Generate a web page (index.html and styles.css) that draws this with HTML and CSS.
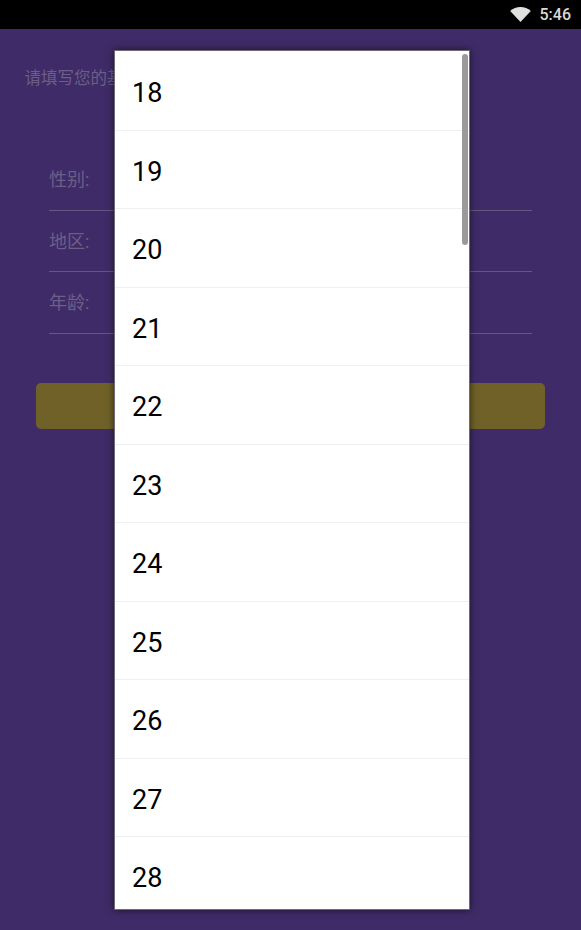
FILE: index.html
```html
<!DOCTYPE html>
<html lang="zh-CN">
<head>
    <meta charset="UTF-8">
    <meta name="viewport" content="width=device-width, initial-scale=1.0">
    <title>基本信息</title>
    <link rel="stylesheet" href="styles.css">
</head>
<body>
    <div class="status-bar">
        <svg class="wifi" viewBox="0 0 22 16"><path d="M0 4.2C3 1.6 6.8 0 11 0s8 1.6 11 4.2L11 16z"/></svg>
        <span class="clock">5:46</span>
    </div>

    <div class="page">
        <p class="intro">请填写您的基本信息</p>
        <div class="form">
            <div class="field">性别:</div>
            <div class="field">地区:</div>
            <div class="field">年龄:</div>
        </div>
        <div class="submit"></div>
    </div>

    <!-- age dropdown -->
    <div class="dropdown">
        <div class="option">18</div>
        <div class="option">19</div>
        <div class="option">20</div>
        <div class="option">21</div>
        <div class="option">22</div>
        <div class="option">23</div>
        <div class="option">24</div>
        <div class="option">25</div>
        <div class="option">26</div>
        <div class="option">27</div>
        <div class="option">28</div>
        <div class="scrollbar"></div>
    </div>
</body>
</html>
```

FILE: styles.css
```css
html, body {
    margin: 0;
    padding: 0;
    height: 930px;
    overflow: hidden;
}
body {
    background: #3f2b67;
    font-family: Roboto, "Noto Sans CJK SC", sans-serif;
}
.status-bar {
    height: 29px;
    background: #000;
    display: flex;
    align-items: center;
    justify-content: flex-end;
    padding-right: 10px;
    gap: 9px;
}
.wifi {
    width: 21px;
    height: 15px;
    fill: #e0e0e0;
}
.clock {
    color: #d8d8d8;
    font-size: 16px;
    font-weight: 500;
}
.page {
    padding: 40px 36px 0 24.5px;
}
.intro {
    margin: 0;
    color: #6c5e87;
    font-size: 16.5px;
    line-height: 20px;
}
.form {
    margin: 60px 13px 0 24.5px;
}
.field {
    height: 61.5px;
    box-sizing: border-box;
    border-bottom: 1px solid #655780;
    color: #6c5e87;
    font-size: 18px;
    line-height: 24px;
    padding-top: 19px;
}
.submit {
    height: 46px;
    margin: 49px 0 0 11.5px;
    border-radius: 5px;
    background: #6f6128;
}
.dropdown {
    position: absolute;
    left: 115px;
    top: 51px;
    width: 354px;
    height: 857px;
    padding-top: 1px;
    overflow: hidden;
    background: #fff;
    outline: 1px solid #6f6a78;
    box-shadow: 0 0 7px 1px rgba(0, 0, 0, 0.6);
}
.option {
    height: 78.5px;
    box-sizing: border-box;
    border-bottom: 1px solid #efefef;
    padding-left: 17px;
    color: #000;
    font-size: 27px;
    line-height: 82px;
}
.scrollbar {
    position: absolute;
    top: 3px;
    right: 1px;
    width: 6px;
    height: 191px;
    border-radius: 3px;
    background: #9a9a9a;
}
```
